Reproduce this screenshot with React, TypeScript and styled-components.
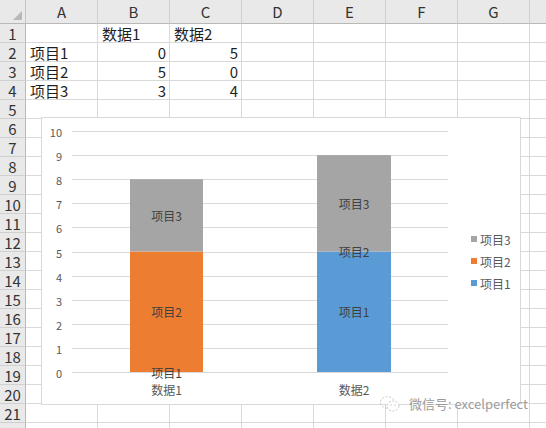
import React from "react";
import styled, { createGlobalStyle } from "styled-components";

const GlobalStyle = createGlobalStyle`
  html, body {
    margin: 0;
    padding: 0;
    background: #ffffff;
    overflow: hidden;
  }
  body {
    font-family: "Noto Sans CJK SC", "Noto Sans", sans-serif;
  }
`;

// H is only partly in view, so its letter is off-screen
const COLS = ["A", "B", "C", "D", "E", "F", "G", ""];
const ROW_COUNT = 22;

const data: (string | number | null)[][] = [
  [null, "数据1", "数据2"],
  ["项目1", 0, 5],
  ["项目2", 5, 0],
  ["项目3", 3, 4],
];

const Sheet = styled.div`
  position: relative;
  width: 546px;
  height: 428px;
  overflow: hidden;
  display: grid;
  grid-template-columns: 26px repeat(8, 72px);
  grid-template-rows: 24px;
  grid-auto-rows: 19px;
  color: #1f1f1f;
`;

const Corner = styled.div`
  position: relative;
  background: #e9e9e9;
  border-right: 1px solid #c4c4c4;
  border-bottom: 1px solid #b8b8b8;
  box-sizing: border-box;
  &::after {
    content: "";
    position: absolute;
    right: 3px;
    bottom: 3px;
    width: 0;
    height: 0;
    border-left: 9px solid transparent;
    border-bottom: 9px solid #b8b8b8;
  }
`;

const ColHead = styled.div`
  display: flex;
  align-items: center;
  justify-content: center;
  background: #e9e9e9;
  border-right: 1px solid #d0d0d0;
  border-bottom: 1px solid #b8b8b8;
  box-sizing: border-box;
  font-size: 15px;
  color: #333;
`;

const RowHead = styled.div`
  display: flex;
  align-items: center;
  justify-content: center;
  background: #e9e9e9;
  border-right: 1px solid #b8b8b8;
  border-bottom: 1px solid #d0d0d0;
  box-sizing: border-box;
  font-size: 15px;
  color: #333;
`;

const Cell = styled.div<{ $num?: boolean }>`
  display: flex;
  align-items: center;
  justify-content: ${({ $num }) => ($num ? "flex-end" : "flex-start")};
  padding: 1px 3px 0 4px;
  border-right: 1px solid #d9d9d9;
  border-bottom: 1px solid #d9d9d9;
  box-sizing: border-box;
  font-size: 15px;
  line-height: 1;
  white-space: nowrap;
  overflow: visible;
`;

const ChartBox = styled.div`
  position: absolute;
  left: 41px;
  top: 117px;
  width: 480px;
  height: 288px;
  box-sizing: border-box;
  background: #ffffff;
  border: 1px solid #d9d9d9;
  display: flex;
  align-items: center;
`;

const Plot = styled.svg`
  flex: none;
  display: block;
  font-family: "Noto Sans CJK SC", sans-serif;
`;

const Legend = styled.div`
  display: flex;
  flex-direction: column;
  gap: 5px;
  padding-left: 9px;
`;

const LegendItem = styled.div`
  display: flex;
  align-items: center;
  gap: 3px;
  font-size: 12px;
  line-height: 17px;
  color: #595959;
`;

const Swatch = styled.span<{ $color: string }>`
  width: 6px;
  height: 6px;
  background: ${({ $color }) => $color};
`;

const Watermark = styled.div`
  position: absolute;
  right: 18px;
  bottom: 15px;
  display: flex;
  align-items: center;
  gap: 8px;
  font-size: 13px;
  color: #9a9a9a;
  text-shadow: 0 0 2px #fff, 0 0 2px #fff;
  white-space: nowrap;
`;

const ORANGE = "#ED7D31";
const BLUE = "#5B9BD5";
const GRAY = "#A5A5A5";

const PLOT_LEFT = 31;
const PLOT_RIGHT = 407;
const Y_TOP = 14;
const UNIT = 24.1;
const yOf = (v: number) => Y_TOP + (10 - v) * UNIT;

type Seg = { from: number; to: number; color: string; label: string; labelAt: number };
const bars: { x: number; w: number; cat: string; segs: Seg[] }[] = [
  {
    x: 89,
    w: 73,
    cat: "数据1",
    segs: [
      { from: 0, to: 0, color: BLUE, label: "项目1", labelAt: 0 },
      { from: 0, to: 5, color: ORANGE, label: "项目2", labelAt: 2.5 },
      { from: 5, to: 8, color: GRAY, label: "项目3", labelAt: 6.5 },
    ],
  },
  {
    x: 276,
    w: 74,
    cat: "数据2",
    segs: [
      { from: 0, to: 5, color: BLUE, label: "项目1", labelAt: 2.5 },
      { from: 5, to: 5, color: ORANGE, label: "项目2", labelAt: 5 },
      { from: 5, to: 9, color: GRAY, label: "项目3", labelAt: 7 },
    ],
  },
];

const Chart = () => (
  <ChartBox>
    <Plot width={420} height={286} viewBox="1 1 420 286">
      {Array.from({ length: 11 }, (_, v) => {
        const y = Math.round(yOf(v)) + 0.5;
        return (
          <g key={v}>
            <line x1={PLOT_LEFT} x2={PLOT_RIGHT} y1={y} y2={y} stroke="#d9d9d9" strokeWidth={1} />
            <text x={21} y={y} textAnchor="end" dominantBaseline="central" fontSize={11} fill="#595959">
              {v}
            </text>
          </g>
        );
      })}
      {bars.map((b) => (
        <g key={b.cat}>
          {b.segs.map((s) =>
            s.to > s.from ? (
              <rect
                key={s.label}
                x={b.x}
                y={yOf(s.to)}
                width={b.w}
                height={yOf(s.from) - yOf(s.to)}
                fill={s.color}
              />
            ) : null
          )}
          {b.segs.map((s) => (
            <text
              key={s.label + "t"}
              x={b.x + b.w / 2}
              y={yOf(s.labelAt)}
              textAnchor="middle"
              dominantBaseline="central"
              fontSize={12}
              fill="#404040"
            >
              {s.label}
            </text>
          ))}
          <text
            x={b.x + b.w / 2}
            y={272}
            textAnchor="middle"
            dominantBaseline="central"
            fontSize={12}
            fill="#595959"
          >
            {b.cat}
          </text>
        </g>
      ))}
    </Plot>
    <Legend>
      <LegendItem>
        <Swatch $color={GRAY} />
        项目3
      </LegendItem>
      <LegendItem>
        <Swatch $color={ORANGE} />
        项目2
      </LegendItem>
      <LegendItem>
        <Swatch $color={BLUE} />
        项目1
      </LegendItem>
    </Legend>
  </ChartBox>
);

const WeChatIcon = () => (
  <svg width="22" height="18" viewBox="0 0 22 18">
    <ellipse cx="8.5" cy="7.5" rx="7" ry="5.8" fill="none" stroke="#c8c8c8" strokeWidth="1" strokeDasharray="2 1.5" />
    <ellipse cx="14" cy="11" rx="6" ry="5" fill="#fff" stroke="#c8c8c8" strokeWidth="1" strokeDasharray="2 1.5" />
    <circle cx="12" cy="10" r="0.8" fill="#c8c8c8" />
    <circle cx="16" cy="10" r="0.8" fill="#c8c8c8" />
  </svg>
);

export default function App() {
  return (
    <>
      <GlobalStyle />
      <Sheet>
        <Corner />
        {COLS.map((c, ci) => (
          <ColHead key={ci}>{c}</ColHead>
        ))}
        {Array.from({ length: ROW_COUNT }, (_, r) => (
          <React.Fragment key={r}>
            {/* last row is only a sliver, its number sits below the fold */}
            <RowHead>{r < ROW_COUNT - 1 ? r + 1 : ""}</RowHead>
            {COLS.map((c, ci) => {
              const v = data[r]?.[ci] ?? null;
              return (
                <Cell key={ci} $num={typeof v === "number"}>
                  {v}
                </Cell>
              );
            })}
          </React.Fragment>
        ))}
        <Chart />
        <Watermark>
          <WeChatIcon />
          微信号: excelperfect
        </Watermark>
      </Sheet>
    </>
  );
}
